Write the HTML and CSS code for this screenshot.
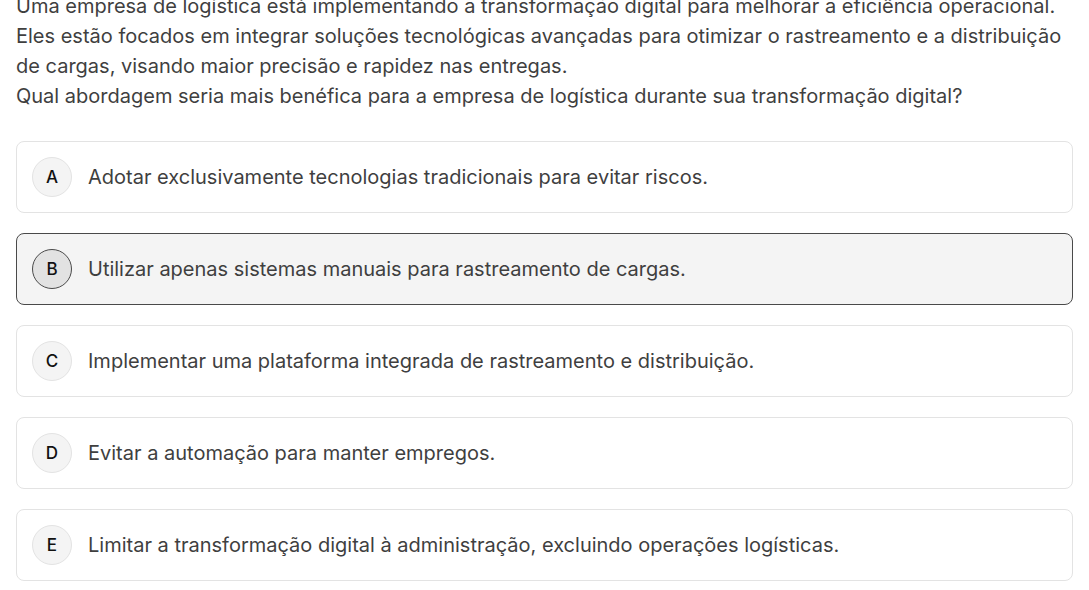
FILE: index.html
```html
<!DOCTYPE html>
<html lang="pt-BR">
<head>
<meta charset="utf-8">
<link rel="stylesheet" href="styles.css">
</head>
<body>
<main class="question">
  <div class="statement">
    <p>Uma empresa de logística está implementando a transformação digital para melhorar a eficiência operacional. Eles estão focados em integrar soluções tecnológicas avançadas para otimizar o rastreamento e a distribuição de cargas, visando maior precisão e rapidez nas entregas.</p>
    <p>Qual abordagem seria mais benéfica para a empresa de logística durante sua transformação digital?</p>
  </div>
  <ul class="options">
    <li class="option"><span class="letter">A</span><span class="text">Adotar exclusivamente tecnologias tradicionais para evitar riscos.</span></li>
    <li class="option selected"><span class="letter">B</span><span class="text">Utilizar apenas sistemas manuais para rastreamento de cargas.</span></li>
    <li class="option"><span class="letter">C</span><span class="text">Implementar uma plataforma integrada de rastreamento e distribuição.</span></li>
    <li class="option"><span class="letter">D</span><span class="text">Evitar a automação para manter empregos.</span></li>
    <li class="option"><span class="letter">E</span><span class="text">Limitar a transformação digital à administração, excluindo operações logísticas.</span></li>
  </ul>
</main>
</body>
</html>
```
FILE: styles.css
```css
* { box-sizing: border-box; }
html, body { margin: 0; padding: 0; background: #fff; }
body {
  font-family: Inter, "Noto Sans", sans-serif;
  color: #3f3f3f;
  overflow: hidden;
}
.question {
  padding: 0 16px;
  margin-top: -9px;
}
.statement p {
  margin: 0;
  font-size: 20px;
  line-height: 30px;
}
.options {
  list-style: none;
  margin: 30px 0 0;
  padding: 0;
  display: flex;
  flex-direction: column;
  gap: 20px;
}
.option {
  display: flex;
  align-items: center;
  gap: 16px;
  height: 72px;
  padding: 0 15px;
  border: 1px solid #e3e3e3;
  border-radius: 8px;
  background: #fff;
}
.option.selected {
  background: #f4f4f4;
  border-color: #4a4a4a;
}
.letter {
  flex: none;
  width: 40px;
  height: 40px;
  border-radius: 50%;
  border: 1px solid #e3e3e3;
  background: #f4f4f4;
  display: flex;
  align-items: center;
  justify-content: center;
  font-size: 17px;
  font-weight: 500;
  color: #111;
}
.selected .letter {
  background: #e2e2e2;
  border-color: #4a4a4a;
}
.text {
  font-size: 20px;
  line-height: 28px;
}
```
